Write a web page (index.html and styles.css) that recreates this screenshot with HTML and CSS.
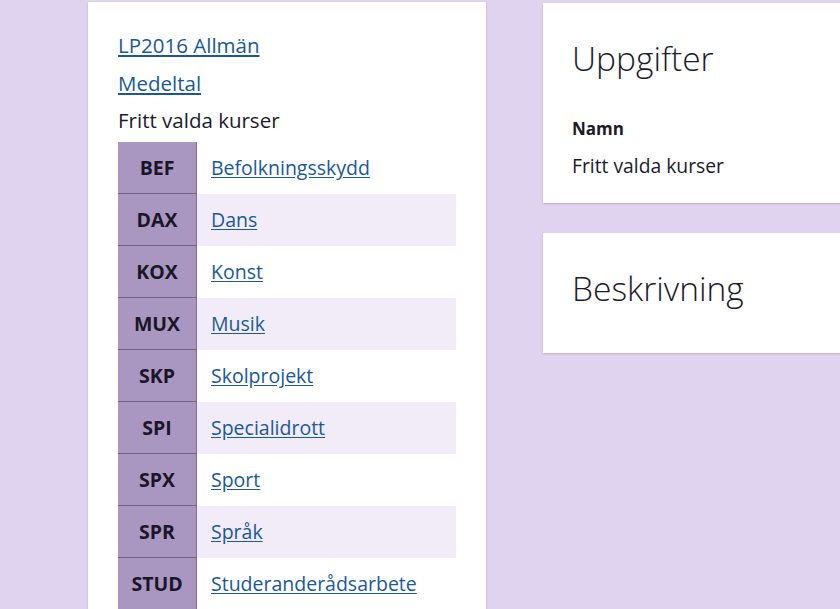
FILE: index.html
```html
<!DOCTYPE html>
<html lang="sv">
<head>
    <meta charset="UTF-8">
    <meta name="viewport" content="width=device-width, initial-scale=1.0">
    <title>Fritt valda kurser</title>
    <link rel="stylesheet" href="styles.css">
</head>
<body>
    <main class="sida">
        <section class="kort kort-vanster">
            <a class="brodsmula" href="#">LP2016 Allmän</a>
            <a class="brodsmula" href="#">Medeltal</a>
            <p class="brodsmula aktuell">Fritt valda kurser</p>

            <table class="kurser">
                <tbody>
                    <tr><th>BEF</th><td><a href="#">Befolkningsskydd</a></td></tr>
                    <tr><th>DAX</th><td><a href="#">Dans</a></td></tr>
                    <tr><th>KOX</th><td><a href="#">Konst</a></td></tr>
                    <tr><th>MUX</th><td><a href="#">Musik</a></td></tr>
                    <tr><th>SKP</th><td><a href="#">Skolprojekt</a></td></tr>
                    <tr><th>SPI</th><td><a href="#">Specialidrott</a></td></tr>
                    <tr><th>SPX</th><td><a href="#">Sport</a></td></tr>
                    <tr><th>SPR</th><td><a href="#">Språk</a></td></tr>
                    <tr><th>STUD</th><td><a href="#">Studeranderådsarbete</a></td></tr>
                </tbody>
            </table>
        </section>

        <div class="hoger">
            <section class="kort">
                <h2>Uppgifter</h2>
                <dl class="uppgifter">
                    <dt>Namn</dt>
                    <dd>Fritt valda kurser</dd>
                </dl>
            </section>

            <section class="kort">
                <h2>Beskrivning</h2>
            </section>
        </div>
    </main>
</body>
</html>
```

FILE: styles.css
```css
html, body {
    overflow: hidden;
}

body {
    background-color: #e0d3ef; /* lila bakgrund */
    color: #1c1a2b;
    font-family: "Open Sans", "Noto Sans", sans-serif;
    margin: 0;
    padding: 0;
}

.sida {
    display: flex;
    align-items: flex-start;
    gap: 57px;
    padding: 2px 0 0 88px;
    width: 1000px;
}

.kort {
    background-color: #ffffff;
    box-shadow: 0 1px 2px rgba(80, 60, 110, 0.25);
    padding: 34px 29px 25px;
}

.kort-vanster {
    width: 338px;
    padding: 30px 30px 40px;
    flex-shrink: 0;
}

.brodsmula {
    display: block;
    font-size: 20.5px;
    line-height: 27px;
    margin: 0 0 10.5px;
}

.aktuell {
    margin-bottom: 8px;
}

a {
    color: #19599a;
    text-decoration: underline;
    text-underline-offset: 2px;
}

.kurser {
    border-collapse: collapse;
    width: 100%;
}

.kurser th {
    background-color: #a996c1;
    border-right: 1px solid #7e6f93;
    border-bottom: 1px solid #6e6383;
    color: #1a1628;
    font-size: 19.5px;
    font-weight: 700;
    height: 51px;
    padding: 0;
    text-align: center;
    width: 78px;
}

.kurser td {
    font-size: 19.5px;
    height: 51px;
    padding: 0 0 0 14px;
}

.kurser tr:nth-child(even) td {
    background-color: #f2ecf8;
}

.hoger {
    display: flex;
    flex-direction: column;
    gap: 30px;
    width: 400px;
    flex-shrink: 0;
    padding-top: 1px;
}

.hoger h2 {
    font-size: 33.5px;
    font-weight: 300;
    line-height: 42px;
    margin: 0 0 19px;
}

.uppgifter {
    margin: 38px 0 0;
}

.uppgifter dt {
    font-size: 17px;
    font-weight: 700;
    line-height: 24px;
}

.uppgifter dd {
    font-size: 19.3px;
    line-height: 24px;
    margin: 13px 0 0;
}
```
